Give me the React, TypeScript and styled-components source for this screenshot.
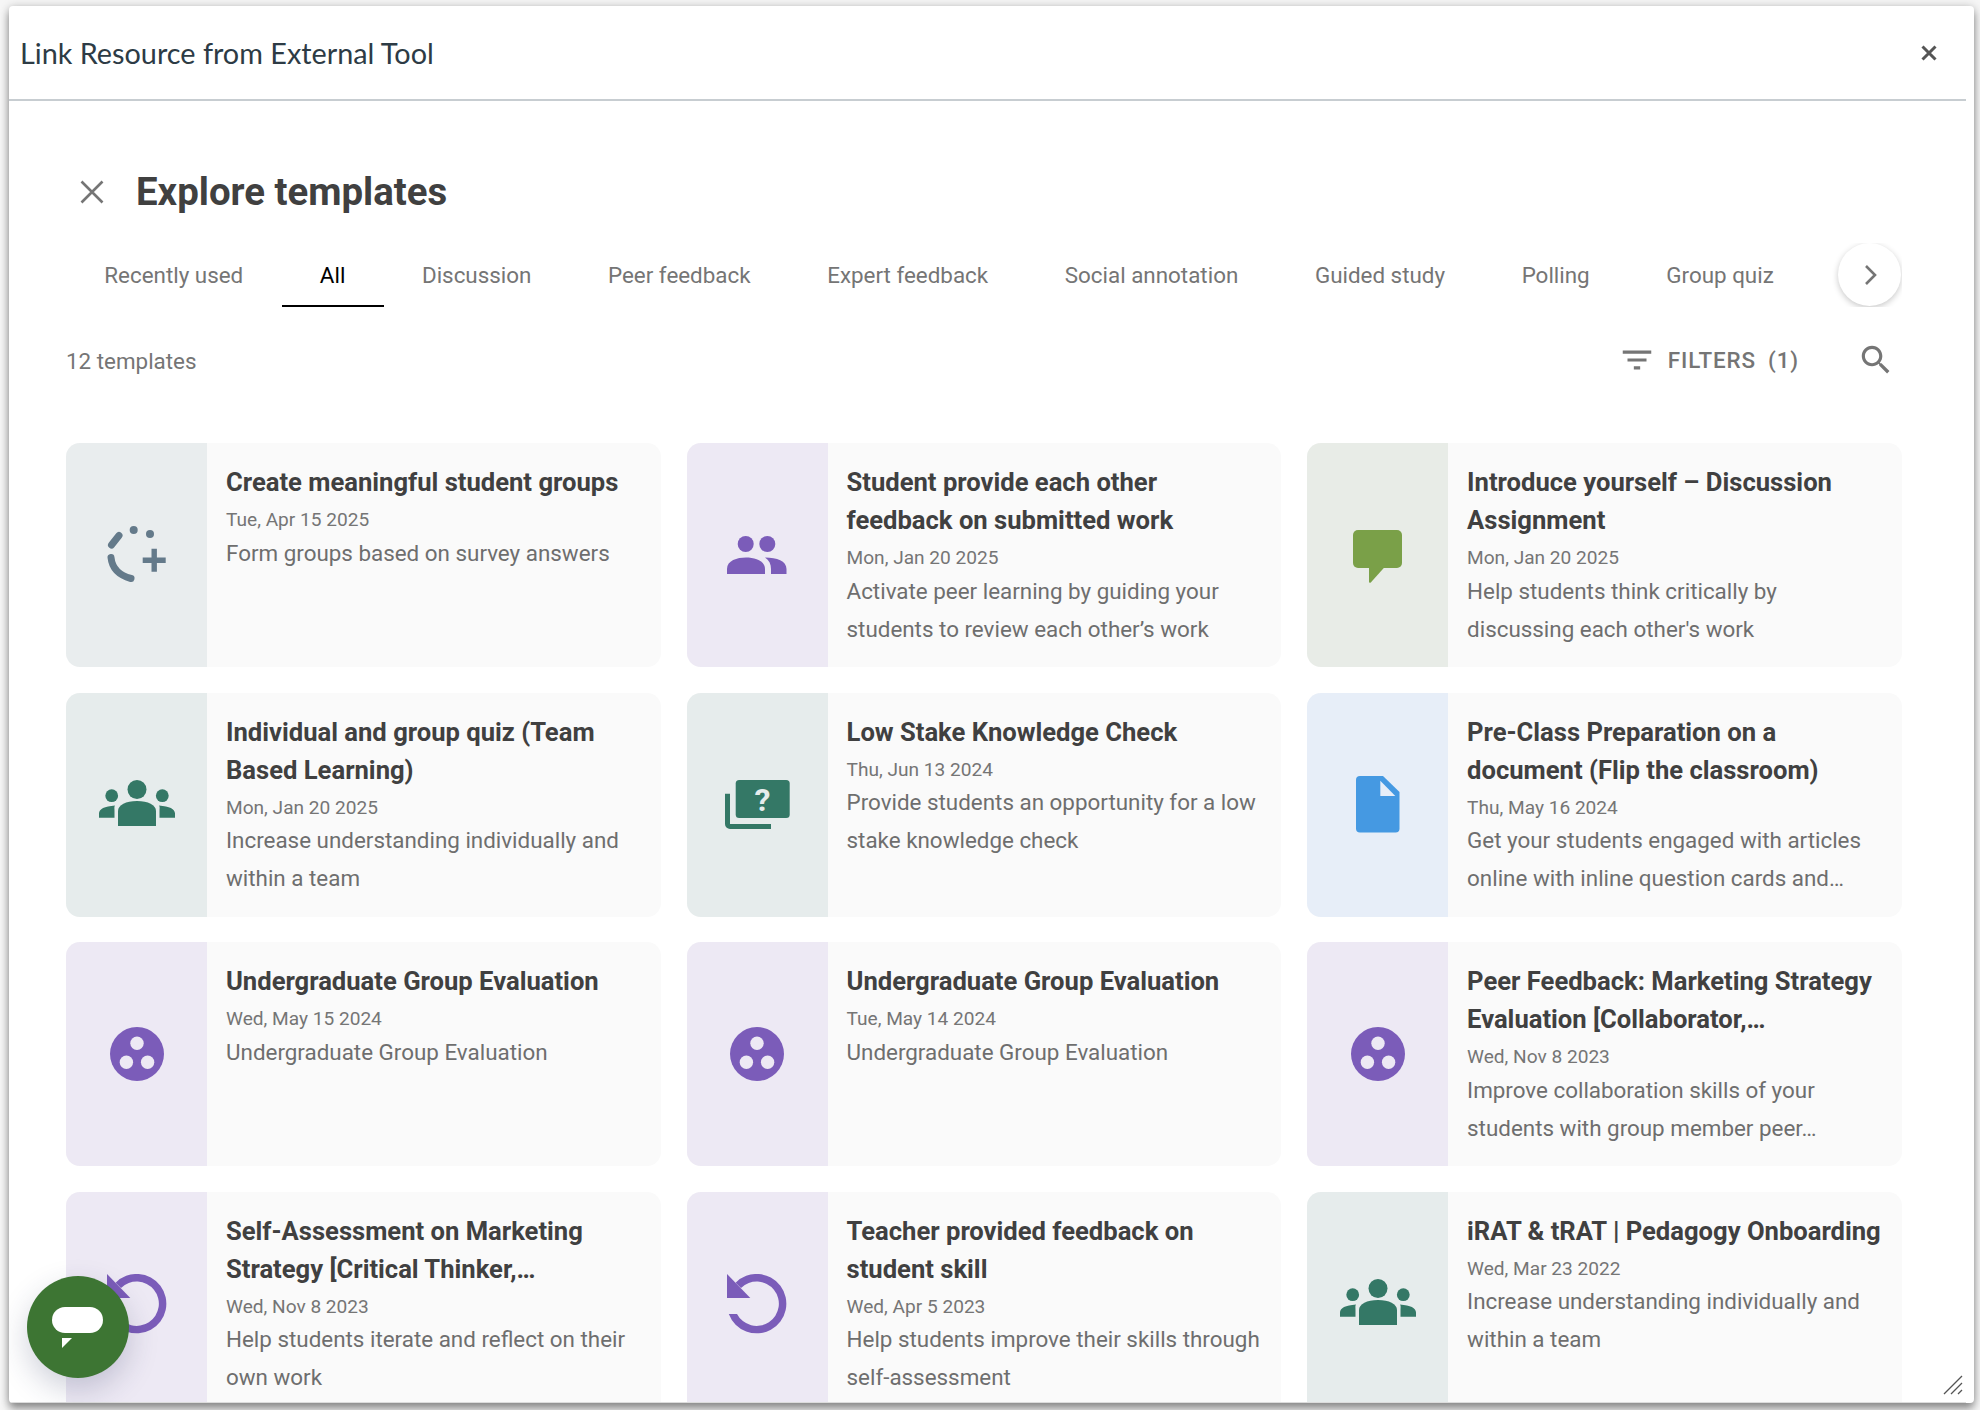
import React from 'react';
import styled, { createGlobalStyle } from 'styled-components';

const GlobalStyle = createGlobalStyle`
  html, body {
    margin: 0;
    height: 100%;
    background: #f6f6f6;
    overflow: hidden;
  }
  * {
    box-sizing: border-box;
  }
`;

const Page = styled.div`
  width: 1980px;
  height: 1410px;
  padding: 6px 6px 7px 9px;
  font-family: Roboto, 'Liberation Sans', sans-serif;
`;

const Modal = styled.div`
  position: relative;
  width: 100%;
  height: 100%;
  padding-right: 8px;
  background: #fff;
  border-radius: 4px;
  box-shadow: 0 6px 8px rgba(0, 0, 0, 0.38), 0 0 10px rgba(0, 0, 0, 0.18);
  overflow: hidden;
`;

const Dialog = styled.div`
  display: flex;
  flex-direction: column;
  height: 100%;
  border-bottom: 1px solid #dcdcdc;
  overflow: hidden;
`;

const Header = styled.header`
  display: flex;
  flex: none;
  align-items: center;
  justify-content: space-between;
  height: 95px;
  padding: 0 29px 0 11px;
  border-bottom: 2px solid #c7cdd1;
`;

const HeaderTitle = styled.h1`
  margin: 0;
  font-family: Lato, sans-serif;
  font-size: 28.8px;
  font-weight: 400;
  color: #2d3b45;
`;

const Content = styled.main`
  flex: 1;
  min-height: 0;
  padding: 60px 64px 0 57px;
  overflow: hidden;
`;

const TitleRow = styled.div`
  display: flex;
  align-items: center;
  height: 60px;
  padding: 1px 0 0 14px;
  gap: 32px;
`;

const PageTitle = styled.h2`
  margin: 0;
  font-size: 38.4px;
  font-weight: 700;
  color: #404040;
`;

const TabBar = styled.div`
  position: relative;
  display: flex;
  height: 64px;
  margin-top: 22px;
  overflow: hidden;
`;

const Tab = styled.div<{ $active?: boolean }>`
  flex: none;
  display: flex;
  align-items: center;
  justify-content: center;
  height: 64px;
  min-width: 102px;
  padding: 2px 38.3px 0;
  font-size: 22.4px;
  color: ${p => (p.$active ? '#000' : '#757575')};
  border-bottom: 2px solid ${p => (p.$active ? '#000' : 'transparent')};
`;

const ScrollButton = styled.div`
  position: absolute;
  top: 0;
  right: 1px;
  display: flex;
  align-items: center;
  justify-content: center;
  width: 63px;
  height: 63px;
  background: #fff;
  border-radius: 50%;
  box-shadow: 0 2px 6px rgba(0, 0, 0, 0.22);
`;

const ToolRow = styled.div`
  display: flex;
  align-items: center;
  justify-content: space-between;
  height: 40px;
  margin-top: 33px;
`;

const Count = styled.div`
  padding-top: 2px;
  font-size: 22.4px;
  color: #757575;
`;

const Tools = styled.div`
  display: flex;
  align-items: center;
  padding-right: 7px;
`;

const FilterButton = styled.div`
  display: flex;
  align-items: center;
  margin-right: 58px;
  font-size: 22.4px;
  font-weight: 500;
  letter-spacing: 0.9px;
  color: #757575;
  gap: 12px;
`;

const FilterCount = styled.span`
  margin-left: 0;
`;

const Grid = styled.div`
  display: grid;
  grid-template-columns: repeat(3, 1fr);
  grid-auto-rows: 224px;
  gap: 25.6px;
  margin-top: 63px;
`;

const Card = styled.article`
  display: flex;
  background: #fafafa;
  border-radius: 14px;
  overflow: hidden;
`;

const IconPane = styled.div<{ $bg: string }>`
  flex: none;
  display: flex;
  align-items: center;
  justify-content: center;
  width: 141px;
  background: ${p => p.$bg};
`;

const CardBody = styled.div`
  flex: 1;
  min-width: 0;
  padding: 20px 18px 0 19px;
`;

const CardTitle = styled.h3`
  margin: 0;
  font-size: 25.6px;
  font-weight: 700;
  line-height: 38px;
  color: #404040;
`;

const CardDate = styled.div`
  padding-top: 5px;
  font-size: 19.1px;
  line-height: 28px;
  color: #757575;
`;

const CardText = styled.p`
  margin: -0.5px 0 0;
  font-size: 22.4px;
  line-height: 38px;
  color: #6e6e6e;
`;

const ChatBubble = styled.div`
  position: absolute;
  left: 18px;
  bottom: 25px;
  display: flex;
  align-items: center;
  justify-content: center;
  width: 102px;
  height: 102px;
  background: #3d7533;
  border-radius: 50%;
  box-shadow: 0 12px 30px rgba(40, 50, 90, 0.22);
`;

const ResizeGrip = styled.svg`
  position: absolute;
  right: 11px;
  bottom: 8px;
`;

type IconProps = { color: string; bg: string };

const GroupAddIcon = () => (
  <svg width="59" height="58" viewBox="0 0 59 58">
    <circle cx="26.7" cy="4" r="4" fill="#647a8a" />
    <circle cx="43" cy="8" r="4" fill="#647a8a" />
    <g fill="none" stroke="#647a8a" strokeWidth="7" strokeLinecap="round">
      <path d="M12 9.5 L4.5 19" />
      <path d="M4 31.5 C5 41 11 49 24 52.5" />
    </g>
    <path d="M44.500 22.700h5.400v8.800h8.800v5.400h-8.800v8.800h-5.400v-8.800h-8.800v-5.400h8.800z" fill="#647a8a" />
  </svg>
);

const PeopleIcon = ({ color }: IconProps) => (
  <svg width="60" height="38" viewBox="0 0 60 38" fill={color}>
    <circle cx="18.7" cy="8" r="8" />
    <circle cx="40.3" cy="8" r="8" />
    <path d="M0 38V33C0 24.500 10 21.500 19 21.500S38 24.500 38 33V38Z" />
    <path d="M38 21.500C50 21.500 59.500 25 59.500 33V38H44V33C44 28 42 24 38 21.500Z" />
  </svg>
);

const TeamIcon = ({ color }: IconProps) => (
  <svg width="76" height="49" viewBox="0 0 76 49" fill={color}>
    <circle cx="38" cy="9.500" r="9.500" />
    <circle cx="12.700" cy="15.700" r="6.400" />
    <circle cx="63.300" cy="15.700" r="6.400" />
    <path d="M19 46V31C19 25 27 21 38 21S57 25 57 31V46Z" />
    <path d="M0 37.700V33.500C0 29 5.500 26.300 16 25.500C15 27 15.500 28 15.500 31V37.700Z" />
    <path d="M76 37.700V33.500C76 29 70.500 26.300 60 25.500C61 27 60.500 28 60.500 31V37.700Z" />
  </svg>
);

const QuizIcon = ({ color, bg }: IconProps) => (
  <svg width="65" height="49" viewBox="0 0 65 49">
    <rect x="10.700" y="0" width="54" height="38" rx="3.500" fill={color} />
    <path d="M0 13.700H5V44H46V49H5A5 5 0 0 1 0 44Z" fill={color} />
    <text
      x="37.500"
      y="30.500"
      textAnchor="middle"
      fontFamily="Roboto, sans-serif"
      fontSize="32"
      fontWeight="700"
      fill={bg}
    >
      ?
    </text>
  </svg>
);

const SpeechIcon = ({ color }: IconProps) => (
  <svg width="49" height="55" viewBox="0 -2 49 55" fill={color}>
    <rect width="49" height="38" rx="5" />
    <path d="M16 37H31.700L18 52.300C17 53.300 16 52.800 16 51.500Z" />
  </svg>
);

const DocIcon = ({ color, bg }: IconProps) => (
  <svg width="44" height="57" viewBox="0 0 44 57">
    <path
      d="M4 0H27L43.500 16V52.500A4 4 0 0 1 39.500 56.500H4A4 4 0 0 1 0 52.500V4A4 4 0 0 1 4 0Z"
      fill={color}
    />
    <path d="M24.300 4.700V20H39.300Z" fill={bg} />
  </svg>
);

const DotsIcon = ({ color, bg }: IconProps) => (
  <svg width="54" height="54" viewBox="0 0 54 54">
    <circle cx="27" cy="27" r="27" fill={color} />
    <g fill={bg}>
      <circle cx="27" cy="16.300" r="6.700" />
      <circle cx="16.400" cy="35.300" r="6.700" />
      <circle cx="37.600" cy="35.300" r="6.700" />
    </g>
  </svg>
);

const ReplayIcon = ({ color }: IconProps) => (
  <svg width="60" height="60" viewBox="0 0 60 60" fill={color}>
    <path d="M8.600 8.700A29.700 29.700 0 1 1 1.800 40H10A22.200 22.200 0 1 0 14 14Z" />
    <path d="M0 0V24H23.300Z" />
  </svg>
);

const purple = { bg: '#ede9f4', color: '#7b5cb9' };
const teal = { bg: '#e6ecec', color: '#347866' };

type Template = {
  title: string;
  date: string;
  text: string;
  bg: string;
  color: string;
  Icon: React.FC<IconProps>;
};

const templates: Template[] = [
  {
    title: 'Create meaningful student groups',
    date: 'Tue, Apr 15 2025',
    text: 'Form groups based on survey answers',
    bg: '#e9edee',
    color: '#647a8a',
    Icon: GroupAddIcon,
  },
  {
    title: 'Student provide each other feedback on submitted work',
    date: 'Mon, Jan 20 2025',
    text: 'Activate peer learning by guiding your students to review each other’s work',
    ...purple,
    Icon: PeopleIcon,
  },
  {
    title: 'Introduce yourself – Discussion Assignment',
    date: 'Mon, Jan 20 2025',
    text: "Help students think critically by discussing each other's work",
    bg: '#e8ece7',
    color: '#7aa048',
    Icon: SpeechIcon,
  },
  {
    title: 'Individual and group quiz (Team Based Learning)',
    date: 'Mon, Jan 20 2025',
    text: 'Increase understanding individually and within a team',
    ...teal,
    Icon: TeamIcon,
  },
  {
    title: 'Low Stake Knowledge Check',
    date: 'Thu, Jun 13 2024',
    text: 'Provide students an opportunity for a low stake knowledge check',
    ...teal,
    Icon: QuizIcon,
  },
  {
    title: 'Pre-Class Preparation on a document (Flip the classroom)',
    date: 'Thu, May 16 2024',
    text: 'Get your students engaged with articles online with inline question cards and…',
    bg: '#e7eef8',
    color: '#4599e2',
    Icon: DocIcon,
  },
  {
    title: 'Undergraduate Group Evaluation',
    date: 'Wed, May 15 2024',
    text: 'Undergraduate Group Evaluation',
    ...purple,
    Icon: DotsIcon,
  },
  {
    title: 'Undergraduate Group Evaluation',
    date: 'Tue, May 14 2024',
    text: 'Undergraduate Group Evaluation',
    ...purple,
    Icon: DotsIcon,
  },
  {
    title: 'Peer Feedback: Marketing Strategy Evaluation [Collaborator,…',
    date: 'Wed, Nov 8 2023',
    text: 'Improve collaboration skills of your students with group member peer…',
    ...purple,
    Icon: DotsIcon,
  },
  {
    title: 'Self-Assessment on Marketing Strategy [Critical Thinker,…',
    date: 'Wed, Nov 8 2023',
    text: 'Help students iterate and reflect on their own work',
    ...purple,
    Icon: ReplayIcon,
  },
  {
    title: 'Teacher provided feedback on student skill',
    date: 'Wed, Apr 5 2023',
    text: 'Help students improve their skills through self-assessment',
    ...purple,
    Icon: ReplayIcon,
  },
  {
    title: 'iRAT & tRAT | Pedagogy Onboarding',
    date: 'Wed, Mar 23 2022',
    text: 'Increase understanding individually and within a team',
    ...teal,
    Icon: TeamIcon,
  },
];

const tabs = [
  'Recently used',
  'All',
  'Discussion',
  'Peer feedback',
  'Expert feedback',
  'Social annotation',
  'Guided study',
  'Polling',
  'Group quiz',
];

const App: React.FC = () => (
  <Page>
    <GlobalStyle />
    <Modal>
      <Dialog>
        <Header>
          <HeaderTitle>Link Resource from External Tool</HeaderTitle>
          <svg width="16" height="16" viewBox="0 0 16 16">
            <path d="M1.500 1.500L14.500 14.500M14.500 1.500L1.500 14.500" stroke="#555" strokeWidth="3" />
          </svg>
        </Header>
        <Content>
          <TitleRow>
            <svg width="24" height="24" viewBox="0 0 24 24">
              <path d="M1.500 1.500L22.500 22.500M22.500 1.500L1.500 22.500" stroke="#757575" strokeWidth="2.600" />
            </svg>
            <PageTitle>Explore templates</PageTitle>
          </TitleRow>
          <TabBar>
            {tabs.map(tab => (
              <Tab key={tab} $active={tab === 'All'}>
                {tab}
              </Tab>
            ))}
            <ScrollButton>
              <svg width="14" height="22" viewBox="0 0 14 22">
                <path d="M3 2L12 11L3 20" fill="none" stroke="#757575" strokeWidth="2.600" />
              </svg>
            </ScrollButton>
          </TabBar>
          <ToolRow>
            <Count>12 templates</Count>
            <Tools>
              <FilterButton>
                <svg width="38" height="38" viewBox="0 0 24 24" fill="#757575">
                  <path d="M10 18h4v-2h-4v2zM3 6v2h18V6H3zm3 7h12v-2H6v2z" />
                </svg>
                FILTERS
                <FilterCount>(1)</FilterCount>
              </FilterButton>
              <svg width="38" height="38" viewBox="0 0 24 24" fill="#757575">
                <path d="M15.500 14h-.79l-.28-.27C15.410 12.590 16 11.110 16 9.500 16 5.910 13.090 3 9.500 3S3 5.910 3 9.500 5.910 16 9.500 16c1.610 0 3.090-.59 4.230-1.570l.27.28v.79l5 4.990L20.490 19l-4.990-5zm-6 0C7.010 14 5 11.990 5 9.500S7.010 5 9.500 5 14 7.010 14 9.500 11.990 14 9.500 14z" />
              </svg>
            </Tools>
          </ToolRow>
          <Grid>
            {templates.map(({ title, date, text, bg, color, Icon }) => (
              <Card key={title + date}>
                <IconPane $bg={bg}>
                  <Icon color={color} bg={bg} />
                </IconPane>
                <CardBody>
                  <CardTitle>{title}</CardTitle>
                  <CardDate>{date}</CardDate>
                  <CardText>{text}</CardText>
                </CardBody>
              </Card>
            ))}
          </Grid>
        </Content>
      </Dialog>
      <ChatBubble>
        <svg width="52" height="41" viewBox="0 0 52 41" fill="#fff">
          <rect width="51" height="26" rx="13" />
          <path d="M10 31H20L10 41Z" />
        </svg>
      </ChatBubble>
      <ResizeGrip width="20" height="20" viewBox="0 0 20 20">
        <path d="M1 19L19 1M8 19L19 8M15 19L19 15" stroke="#555" strokeWidth="1.300" fill="none" />
      </ResizeGrip>
    </Modal>
  </Page>
);

export default App;
